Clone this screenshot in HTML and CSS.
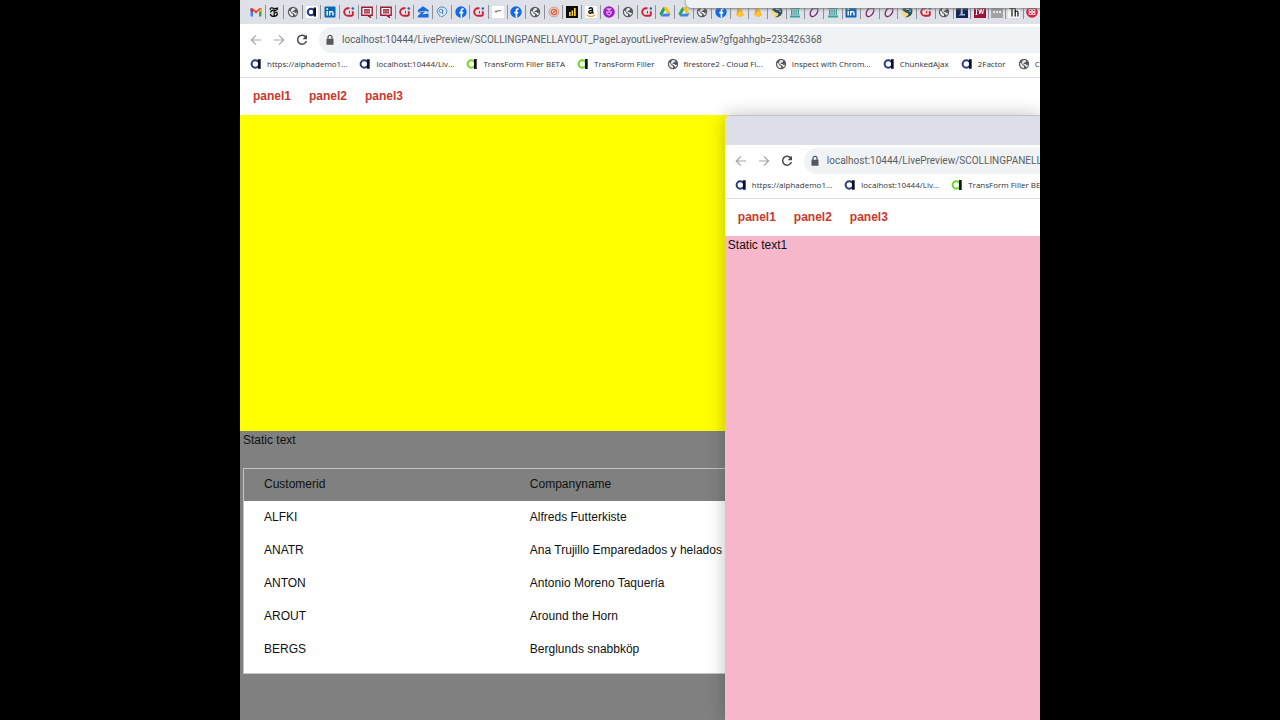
FILE: index.html
```
<!DOCTYPE html>
<html lang="en">
<head>
<meta charset="utf-8">
<title>Scrolling panel layout</title>
<link rel="stylesheet" href="styles.css">
</head>
<body>
<svg class="sprite" aria-hidden="true">
  <symbol id="gmail" viewBox="0 0 12 12"><path d="M.5 10.500V2.500l2.500 2v6z" fill="#4285f4"/><path d="M9 10.500v-6l2.500-2v8z" fill="#34a853"/><path d="M.5 2.500 2 1.700 6 5l4-3.300 1.500.8L6 7.500z" fill="#ea4335"/><path d="m9 4.500 2.500-2v2L9 6.500z" fill="#fbbc04"/><path d="m.5 2.500 2.500 2v2l-2.500-2z" fill="#c5221f"/></symbol>
  <symbol id="times" viewBox="0 0 12 12"><path d="M2.200 3.700C2 1.500 4 1.700 6 2.300s3 .4 3.500-.8M6.200 3.500v6.500M2.300 7.800c.6 3.500 6.700 3.400 7.300-.4M9.500 2c.5 2-1.500 2.600-3.300 2.300C4.300 4 2.600 4.700 2.800 6.500M7 6.500h2.500" fill="none" stroke="#111" stroke-width="1.300"/></symbol>
  <symbol id="globe" viewBox="0 0 12 12"><circle cx="6" cy="6" r="5.200" fill="#55585c"/><path d="M2 4.500 4 6l.5 1.200L6 8v2.200C3.500 10.200 1.700 8 2 4.500zM5 2.200 6.800 2l1.700 1L7 4.500l-1 .2-.5 1.300H7.500l1.300 1.200 1.400-.6C10 8 9 9.300 8 9.600L7.500 8 5 6.300 3.700 5z" fill="#e9ebee"/></symbol>
  <symbol id="alpha" viewBox="0 0 12 12"><circle cx="5.300" cy="6" r="3.700" fill="none" stroke="#2b3a80" stroke-width="2"/><path d="M8 1.200h2.700v9.600H8z" fill="#10131f"/></symbol>
  <symbol id="alphabox" viewBox="0 0 12 12"><path d="M0 0h12v12H0z" fill="#fff"/><circle cx="5" cy="6" r="3.200" fill="none" stroke="#2b3a80" stroke-width="2"/><path d="M7.500 1.500H10v9H7.500z" fill="#10131f"/></symbol>
  <symbol id="alphagreen" viewBox="0 0 12 12"><circle cx="5.300" cy="6" r="3.700" fill="none" stroke="#6fd321" stroke-width="2"/><path d="M8 1h2.700v10H8z" fill="#111"/></symbol>
  <symbol id="linkedin" viewBox="0 0 12 12"><rect x=".5" y=".5" width="11" height="11" rx="1" fill="#0a66b5"/><path d="M3.200 5v4.500M5.700 9.500V5M5.700 7c.3-1.800 3.300-2 3.300.3v2.200" fill="none" stroke="#fff" stroke-width="1.400"/><circle cx="3.200" cy="3" r=".9" fill="#fff"/></symbol>
  <symbol id="cj" viewBox="0 0 12 12"><path d="M6.500 2.200H5a3.800 3.800 0 0 0 0 7.600h3.200c1.200 0 1.600-.7 1.600-1.800V5.200" fill="none" stroke="#c8202f" stroke-width="1.900"/><path d="M6.500 5v2.500" stroke="#c8202f"/><circle cx="9.800" cy="2.500" r="1.300" fill="#2166b0"/></symbol>
  <symbol id="chat" viewBox="0 0 12 12"><path d="M.8 1.300h10.400v7.900H8.500l.8 2-3-2H.8z" fill="#fff" stroke="#9d1c31" stroke-width="1.400"/><path d="M3 3h6v4.500H3z" fill="#9d1c31"/><path d="M4.200 3v4.500M6 3v4.500M7.800 3v4.500M3 5.200h6" stroke="#f3dfe3" stroke-width=".4"/></symbol>
  <symbol id="zillow" viewBox="0 0 12 12"><path d="M6 .3 11.500 4v2.200L8.800 4.800.9 6.100V4zM1 7l7.500-1.700L5 8.600l6.500-1.200v4H.8V10L4 7.200z" fill="#1769dc"/></symbol>
  <symbol id="pin" viewBox="0 0 12 12"><path d="M4 10.800V9.600C-.3 7 .8 1 6 1s6.500 6 2.200 8.500L5 11" fill="#dceaf6" stroke="#4b89bd"/><path d="M6.500 8V3.500M7 5.500a2 1.700 0 1 1 0-1" fill="none" stroke="#4b89bd"/></symbol>
  <symbol id="facebook" viewBox="0 0 12 12"><circle cx="6" cy="6" r="5.700" fill="#1468e3"/><path d="M6.400 11.500V4.700c0-1.400.7-1.900 2.300-1.700M4.300 6.600h4" fill="none" stroke="#fff" stroke-width="1.600"/></symbol>
  <symbol id="photo" viewBox="0 0 12 12"><path d="M0 0h12v12H0z" fill="#fff"/><path d="m2.500 5 5.500-1 2 1.200H6L4 6.800z" fill="#806a72"/></symbol>
  <symbol id="target" viewBox="0 0 12 12"><circle cx="6" cy="6" r="4.900" fill="#f7e0d7" stroke="#a98f86" stroke-width=".8"/><circle cx="6" cy="6" r="2.800" fill="none" stroke="#e26545" stroke-width="1.400"/><path d="m4.500 7.500 3-3" stroke="#d9523a" stroke-width="1.200"/></symbol>
  <symbol id="bars" viewBox="0 0 12 12"><path d="M0 0h12v12H0z" fill="#0d0d0a"/><path d="M3 6h1.700v4H3zM5.500 4.500h1.600V10H5.500zM8 2h1.700v8H8z" fill="#f5cf3c"/></symbol>
  <symbol id="amazon" viewBox="0 0 12 12"><path d="M0 0h12v12H0z" fill="#fff"/><path d="M4 3c.5-1.800 3.500-1.700 3.500 0v3.500L8.600 7.500M7.500 4.200C3.500 4 3 7 5 7.200c1.300 0 2.400-1 2.500-2" fill="none" stroke="#111" stroke-width="1.400"/><path d="M1.500 8.700c2.500 2 6 2 8.500.2" fill="none" stroke="#f49b22" stroke-width="1.200"/></symbol>
  <symbol id="purple" viewBox="0 0 12 12"><circle cx="6" cy="6" r="5.800" fill="#a21bc5"/><path d="M3.500 3h5M4 5v2.200C4.300 9.500 7.700 9.500 8 7.200V5M6 3v4" fill="none" stroke="#fff" stroke-width=".9"/></symbol>
  <symbol id="drive" viewBox="0 0 12 12"><path d="M4.200 1h3.600L2.400 10.500.5 7.500z" fill="#1fa463"/><path d="M4.200 1h3.600l3.700 6.500H8z" fill="#fbc116"/><path d="M4.100 7.500h7.400l-1.900 3H2.400z" fill="#3f80ee"/><path d="m6 4.400 1.800 3.100H4.200z" fill="#f3f5f7"/></symbol>
  <symbol id="flame" viewBox="0 0 12 12"><path d="M2.300 9 3.700 1l2 3 1-1.700L10 9l-4 2z" fill="#f8a51b"/><path d="m2.300 9 4.200-4.600L10 9l-4 2z" fill="#fdc638"/></symbol>
  <symbol id="swirl" viewBox="0 0 12 12"><circle cx="6" cy="6" r="5.600" fill="#f2db83"/><path d="M1 4C3-1 10-.3 11.300 4c1 5-3.800 8-7.300 7.200 4-1.500 4.500-4 1.500-4.500C3 6.300 2.500 4 1 4z" fill="#24516d"/><path d="M5 3.200c3-.2 4 .8 4.300 2.800" fill="none" stroke="#d8e5e8"/></symbol>
  <symbol id="bank" viewBox="0 0 12 12"><path d="M1 1h10v2H1zM1 9.500h10v2H1zM2 3.500h1.500V9H2zM4.400 3.500h1.200V9H4.400zM6.500 3.500h1.300V9H6.500zM8.700 3.500h1.300V9H8.700z" fill="#35a198"/></symbol>
  <symbol id="oval" viewBox="0 0 12 12"><ellipse cx="6" cy="6" rx="3.100" ry="5" transform="rotate(35 6 6)" fill="none" stroke="#7b2463" stroke-width="1.300"/><path d="M3.500 2.200C5 1 7 2 8 3" fill="none" stroke="#7b2463"/></symbol>
  <symbol id="navy" viewBox="0 0 12 12"><path d="M0 0h12v12H0z" fill="#132554"/><path d="M5 2h1.500l.3 6H9v1.500H2.500L4.500 8z" fill="#aab6d6"/></symbol>
  <symbol id="lw" viewBox="0 0 12 12"><path d="M0 0h12v12H0z" fill="#9f1137"/><path d="M2.500 3v5.500M1.500 3h2M1.500 8.500h2M4.800 3l1 5 1.400-5 1.300 5 1.200-5" fill="none" stroke="#fff"/></symbol>
  <symbol id="dots" viewBox="0 0 12 12"><path d="M0 0h12v12H0z" fill="#a3a3a3"/><path d="M2 6h2M5 6h2M8 6h2" stroke="#fff" stroke-width="1.600"/></symbol>
  <symbol id="th" viewBox="0 0 12 12"><path d="M0 0h12v12H0z" fill="#f6f7f9"/><path d="M1.500 2.500h5M4 2.500v8M7.200 2v8.500M7.200 6.500c.4-2 2.800-2 2.800 0v4" fill="none" stroke="#111" stroke-width="1.200"/></symbol>
  <symbol id="crimson" viewBox="0 0 12 12"><circle cx="6" cy="6" r="5.800" fill="#d51f42"/><path d="M3 3.500h2.500v2H3zm3.500 0H9v2H6.500zM3 6.500h2.500v2H3zm3.500 0H9v2H6.500z" fill="none" stroke="#fff" stroke-width=".8"/></symbol>
  <symbol id="back" viewBox="0 0 12 12"><path d="M11 6H1.500M6 1.300 1.300 6 6 10.700" fill="none" stroke="currentColor" stroke-width="1.200"/></symbol>
  <symbol id="forward" viewBox="0 0 12 12"><path d="M1 6h9.500M6 1.300 10.700 6 6 10.700" fill="none" stroke="currentColor" stroke-width="1.200"/></symbol>
  <symbol id="reload" viewBox="0 0 12 12"><path d="M9.700 3A4.500 4.500 0 1 0 10.400 7" fill="none" stroke="currentColor" stroke-width="1.500"/><path d="M11 .8v4.400H6.600z" fill="currentColor"/></symbol>
  <symbol id="lock" viewBox="0 0 12 12"><path d="M2.500 4.800h7v6h-7z" fill="#55585c"/><path d="M4 5V3.300a2 2 0 0 1 4 0V5" fill="none" stroke="#55585c" stroke-width="1.300"/></symbol>
</svg>

<main class="stage">
  <section class="window window-main">
    <div class="tabs" id="tabs"></div>
    <div class="toolbar">
      <button class="tool faint" aria-label="Back"><svg><use href="#back"/></svg></button>
      <button class="tool faint" aria-label="Forward"><svg><use href="#forward"/></svg></button>
      <button class="tool" aria-label="Reload"><svg><use href="#reload"/></svg></button>
      <div class="address"><svg><use href="#lock"/></svg><input type="text" aria-label="Address" value="localhost:10444/LivePreview/SCOLLINGPANELLAYOUT_PageLayoutLivePreview.a5w?gfgahhgb=233426368"></div>
    </div>
    <nav class="bookmarks" aria-label="Bookmarks">
      <a href="#"><svg><use href="#alpha"/></svg>https://alphademo1...</a>
      <a href="#"><svg><use href="#alpha"/></svg>localhost:10444/Liv...</a>
      <a href="#"><svg><use href="#alphagreen"/></svg>TransForm Filler BETA</a>
      <a href="#"><svg><use href="#alphagreen"/></svg>TransForm Filler</a>
      <a href="#"><svg><use href="#globe"/></svg>firestore2 - Cloud Fi...</a>
      <a href="#"><svg><use href="#globe"/></svg>Inspect with Chrom...</a>
      <a href="#"><svg><use href="#alpha"/></svg>ChunkedAjax</a>
      <a href="#"><svg><use href="#alpha"/></svg>2Factor</a>
      <a href="#"><svg><use href="#globe"/></svg>C</a>
    </nav>
    <nav class="panels" aria-label="Panels"><a href="#">panel1</a><a href="#">panel2</a><a href="#">panel3</a></nav>
    <div class="yellow"></div>
    <div class="lower">
      <p class="static">Static text</p>
      <div class="list">
        <table>
          <thead><tr><th>Customerid</th><th>Companyname</th></tr></thead>
          <tbody>
            <tr><td>ALFKI</td><td>Alfreds Futterkiste</td></tr>
            <tr><td>ANATR</td><td>Ana Trujillo Emparedados y helados</td></tr>
            <tr><td>ANTON</td><td>Antonio Moreno Taquería</td></tr>
            <tr><td>AROUT</td><td>Around the Horn</td></tr>
            <tr><td>BERGS</td><td>Berglunds snabbköp</td></tr>
          </tbody>
        </table>
      </div>
    </div>
  </section>

  <div class="window-edge"></div>

  <section class="window window-front">
    <div class="strip"></div>
    <div class="toolbar">
      <button class="tool faint" aria-label="Back"><svg><use href="#back"/></svg></button>
      <button class="tool faint" aria-label="Forward"><svg><use href="#forward"/></svg></button>
      <button class="tool" aria-label="Reload"><svg><use href="#reload"/></svg></button>
      <div class="address"><svg><use href="#lock"/></svg><input type="text" aria-label="Address" value="localhost:10444/LivePreview/SCOLLINGPANELLAYOUT_PageLayoutLivePreview.a5w"></div>
    </div>
    <nav class="bookmarks" aria-label="Bookmarks">
      <a href="#"><svg><use href="#alpha"/></svg>https://alphademo1...</a>
      <a href="#"><svg><use href="#alpha"/></svg>localhost:10444/Liv...</a>
      <a href="#"><svg><use href="#alphagreen"/></svg>TransForm Filler BETA</a>
    </nav>
    <nav class="panels" aria-label="Panels"><a href="#">panel1</a><a href="#">panel2</a><a href="#">panel3</a></nav>
    <div class="pink"><p class="static">Static text1</p></div>
  </section>
</main>
<script src="tabs.js"></script>
</body>
</html>
```
FILE: styles.css
```
* { box-sizing: border-box; }
body {
  margin: 0;
  background: #000;
  color: #111;
  font: 12px/18px "Liberation Sans", Arial, sans-serif;
}
.sprite { position: absolute; width: 0; height: 0; }
svg { display: block; width: 12px; height: 12px; flex: none; }
a { color: inherit; text-decoration: none; }

.stage {
  position: relative;
  width: 62.5%;
  height: 100vh;
  margin: 0 auto;
  overflow: hidden;
}
.window { display: flex; flex-direction: column; background: #fff; }
.window-main { height: 100%; }

.tabs {
  display: flex;
  flex: none;
  height: 24px;
  padding-left: 7px;
  background: #dee1e8;
}
.tab-group { display: flex; }
.tab-group.wide { flex: 707; }
.tab-group.narrow { flex: 86; }
.tab {
  display: flex;
  flex: 1;
  align-items: center;
  justify-content: center;
  min-width: 0;
  height: 14px;
  margin-top: 5px;
  padding: 0;
  border: 0;
  border-right: 1px solid #8e9197;
  background: none;
}
.narrow .tab:last-child { border-right: 0; }

.toolbar {
  display: flex;
  flex: none;
  align-items: center;
  height: 31px;
  padding-left: 10px;
  overflow: hidden;
}
.tool {
  flex: none;
  width: 12px;
  height: 12px;
  margin-right: 11px;
  padding: 0;
  border: 0;
  background: none;
  color: #45484c;
}
.tool.faint { color: #a2a5a9; }
.address {
  display: flex;
  flex: 1;
  align-items: center;
  gap: 6px;
  min-width: 0;
  height: 26px;
  padding-left: 5px;
  border-radius: 13px 0 0 13px;
  background: #f0f3f5;
}
.address input {
  flex: 1;
  min-width: 0;
  padding: 0;
  border: 0;
  background: none;
  color: #5b5e63;
  font: 10px/16px Roboto, "Open Sans", sans-serif;
}

.bookmarks {
  display: flex;
  flex: none;
  gap: 12px;
  height: 23px;
  padding-left: 10px;
  border-bottom: 1px solid #dcdee1;
  overflow: hidden;
  color: #303236;
  font: 8px/18px "Open Sans", "Noto Sans", sans-serif;
  white-space: nowrap;
}
.bookmarks a { display: flex; flex: none; gap: 5px; align-items: center; height: 18px; }

.panels {
  display: flex;
  flex: none;
  gap: 18px;
  height: 37px;
  padding: 9px 13px;
  color: #c8382c;
  font-weight: bold;
}

.yellow { flex: 316; background: #ff0; }
.lower { flex: 289; padding-left: 3px; background: #808080; }
.static { margin: 0; }
.list {
  margin-top: 19px;
  padding-bottom: 7px;
  border: 1px solid #c4c4c4;
  border-right: 0;
  background: #fff;
}
table { width: 100%; border-collapse: collapse; table-layout: fixed; }
th, td { height: 33px; padding: 0 0 2px 20px; text-align: left; font-weight: normal; }
th:first-child { width: 33.4%; }
thead tr { background: #808080; }
th { height: 32px; }

.window-edge {
  position: absolute;
  top: -6px;
  left: 55.8%;
  right: -12px;
  height: 14px;
  border-radius: 5px;
  background: #f0f1f2;
  box-shadow: 0 1px 3px #777;
}
.window-front {
  position: absolute;
  top: 115px;
  bottom: 0;
  left: 60.6%;
  right: 0;
  border-top-left-radius: 6px;
  overflow: hidden;
  box-shadow: 0 0 18px rgba(0, 0, 0, .25);
}
.strip {
  flex: none;
  height: 30px;
  border-top: 1px solid #c0c1c5;
  background: #dddfe8;
}
.pink { flex: 1; padding-left: 3px; background: #f7b7ca; }
```
FILE: tabs.js
```
const groups = {
  wide: "gmail times globe alphabox linkedin cj chat chat cj zillow pin facebook cj photo facebook globe target bars amazon purple globe cj drive drive globe facebook flame flame swirl bank oval bank linkedin oval oval swirl cj globe",
  narrow: "navy lw dots th crimson"
};
const bar = document.getElementById("tabs");
for (const [name, icons] of Object.entries(groups)) {
  const group = document.createElement("div");
  group.className = "tab-group " + name;
  for (const icon of icons.split(" ")) {
    group.insertAdjacentHTML("beforeend",
      `<button class="tab" aria-label="${icon} tab"><svg><use href="#${icon}"/></svg></button>`);
  }
  bar.append(group);
}
```
